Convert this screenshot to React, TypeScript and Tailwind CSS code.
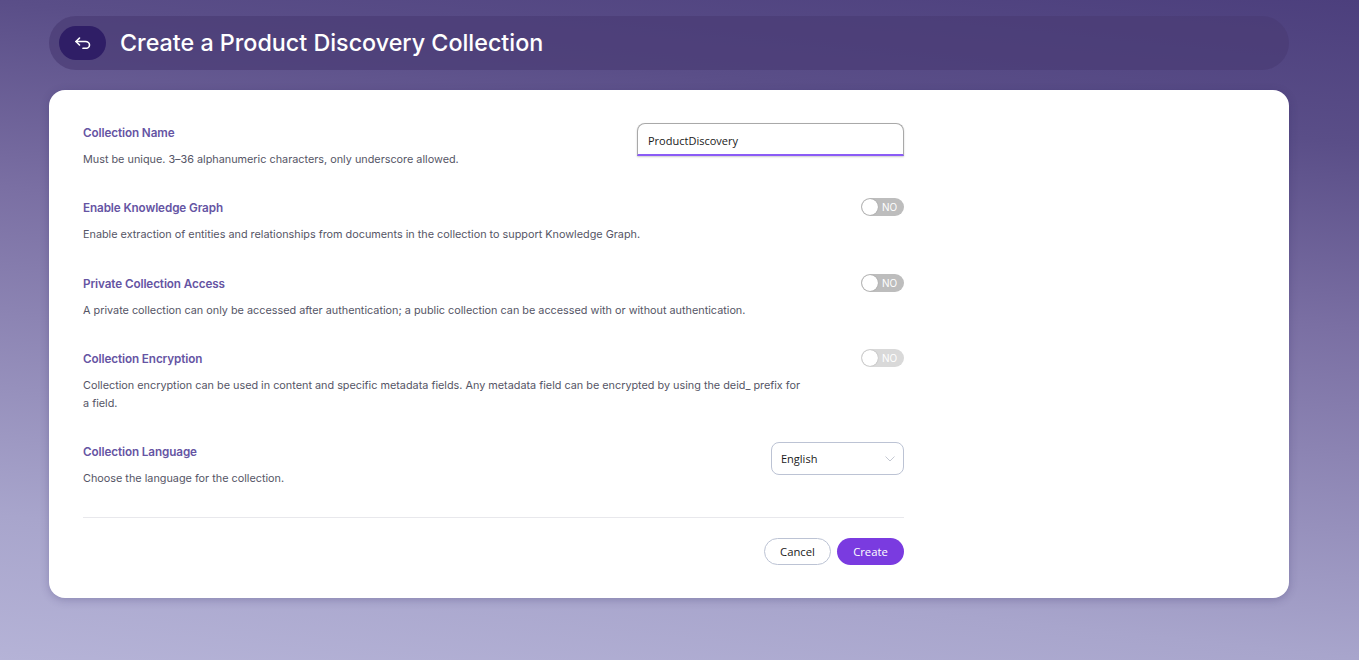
import React from "react";

function Toggle({ dim }: { dim?: boolean }) {
  return (
    <div className={`flex h-[18px] w-[43px] shrink-0 items-center rounded-full pl-[1px] ${dim ? "bg-[#d9d9d9]" : "bg-[#bdbdbd]"}`}>
      <div className="h-4 w-4 rounded-full bg-white shadow-[0_0_1px_rgba(0,0,0,0.4)]" />
      <span className="ml-[4px] text-[10px] leading-none font-normal text-white">NO</span>
    </div>
  );
}

function Row({ title, desc, children, className }: { title: string; desc: React.ReactNode; children: React.ReactNode; className?: string }) {
  return (
    <div className={`flex items-start justify-between ${className ?? ""}`}>
      <div className="max-w-[720px] pt-[1px]">
        <div className="text-[11.7px] leading-[18px] font-semibold tracking-[-0.1px] text-[#6554a3]">{title}</div>
        <div className="mt-[8px] text-[10.84px] leading-[18px] text-[#555566]">{desc}</div>
      </div>
      {children}
    </div>
  );
}

export default function App() {
  return (
    <div className="flex h-[660px] w-full flex-col items-start bg-[linear-gradient(186deg,#4c3f7d_0%,#5a4e88_18%,#7a6fa3_41%,#a8a5cc_82%,#b5b3d7_100%)] pt-[16px] pl-[49px] font-['Inter',sans-serif]">
      <header className="flex h-[54px] w-[1240px] items-center rounded-[27px] bg-[#4a3c75]/70 pl-[10px]">
        <button className="flex h-[34px] w-[47px] items-center justify-center rounded-[17px] bg-[#2f1e66]">
          <svg width="16" height="12" viewBox="0 0 16 12" fill="none" stroke="white" strokeWidth="1.6" strokeLinecap="round" strokeLinejoin="round">
            <path d="M4.5 1 1 4.5 4.5 8" />
            <path d="M1 4.5h9.5a4 3.4 0 0 1 0 6.8H8" />
          </svg>
        </button>
        <h1 className="ml-[14px] text-[23.3px] leading-[32px] font-medium text-white">Create a Product Discovery Collection</h1>
      </header>

      <main className="mt-[20px] h-[508px] w-[1240px] rounded-[16px] bg-white pt-[33px] pl-[34px] shadow-[0_2px_8px_rgba(40,30,90,0.25)]">
        <div className="w-[821px]">
          <Row title="Collection Name" desc="Must be unique. 3–36 alphanumeric characters, only underscore allowed." className="h-[75px]">
            <div className="flex h-[33px] w-[267px] shrink-0 items-center rounded-t-[8px] border border-b-2 border-[#a9a9a9] border-b-[#8b5cf6] pt-[4px] pl-[10px] font-['Open_Sans',sans-serif] text-[11px] text-[#1a1a1a] shadow-[0_1px_2px_rgba(0,0,0,0.2)]">
              ProductDiscovery
            </div>
          </Row>
          <Row title="Enable Knowledge Graph" desc="Enable extraction of entities and relationships from documents in the collection to support Knowledge Graph." className="h-[76px]">
            <Toggle />
          </Row>
          <Row title="Private Collection Access" desc="A private collection can only be accessed after authentication; a public collection can be accessed with or without authentication." className="h-[75px]">
            <Toggle />
          </Row>
          <Row
            title="Collection Encryption"
            desc="Collection encryption can be used in content and specific metadata fields. Any metadata field can be encrypted by using the deid_ prefix for a field."
            className="h-[93px]"
          >
            <Toggle dim />
          </Row>
          <Row title="Collection Language" desc="Choose the language for the collection." className="h-[75px]">
            <div className="flex h-[33px] w-[133px] shrink-0 items-center justify-between rounded-[8px] border border-[#bcc3d4] pr-[8px] pl-[9px] font-['Open_Sans',sans-serif] text-[11px] text-[#1a1a1a]">
              <span className="pt-[2px]">English</span>
              <svg width="10" height="6" viewBox="0 0 10 6" fill="none" stroke="#c4c8d2" strokeWidth="1">
                <path d="M0.5 0.5 5 5 9.5 0.5" />
              </svg>
            </div>
          </Row>
          <div className="flex h-[81px] justify-end gap-[6px] border-t border-[#e8e8ec] pt-[20px] font-['Open_Sans',sans-serif] text-[11.3px]">
            <button className="h-[27px] w-[67px] rounded-full border border-[#bcc3d4] bg-white pt-[1px] text-[#1a1a1a]">Cancel</button>
            <button className="h-[27px] w-[67px] rounded-full bg-[#7a3be0] pt-[1px] text-white">Create</button>
          </div>
        </div>
      </main>
    </div>
  );
}
